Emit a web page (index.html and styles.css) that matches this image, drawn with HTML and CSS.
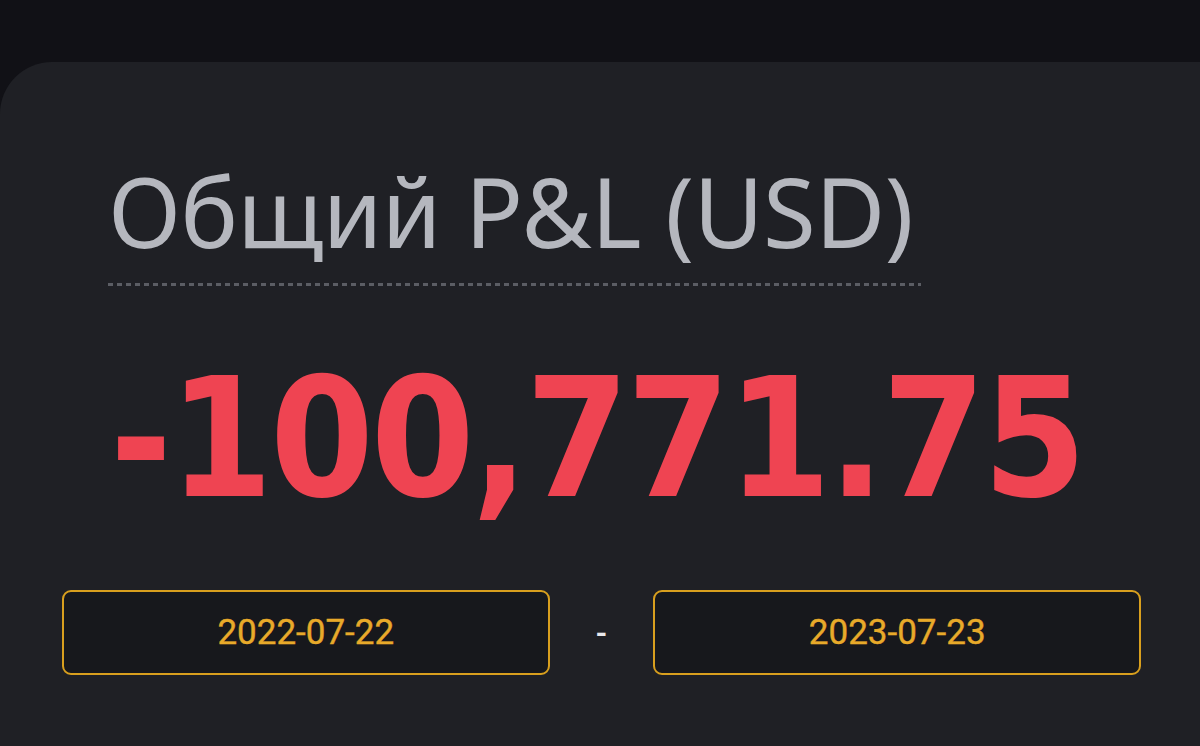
FILE: index.html
```html
<!DOCTYPE html>
<html lang="ru">
<head>
  <meta charset="UTF-8" />
  <meta name="viewport" content="width=device-width, initial-scale=1.0"/>
  <title>Общий P&amp;L</title>
  <link rel="stylesheet" href="styles.css">
</head>
<body>
  <div class="card">
    <div class="pnl-head">
      <h2 class="pnl-title">Общий P&amp;L (USD)</h2>
    </div>
    <div class="pnl-value">-100,771.75</div>
    <div class="range">
      <div class="date-box">2022-07-22</div>
      <span class="range-sep">-</span>
      <div class="date-box">2023-07-23</div>
    </div>
  </div>
</body>
</html>
```

FILE: styles.css
```css
body { margin: 0; padding: 62px 0 0; background: #111116; font-family: "Noto Sans", sans-serif; overflow: hidden; }
.card {
  box-sizing: border-box; background: #1f2025; border-radius: 52px 0 0 0;
  padding: 96px 59px 0 62px; height: calc(100vh - 62px);
}
.pnl-head { margin-left: 46px; display: inline-block; padding-bottom: 22px; padding-right: 8px;
  background-image: linear-gradient(to right, #5b5d64 55%, transparent 55%);
  background-size: 9px 3px; background-repeat: repeat-x; background-position: left bottom;
}
.pnl-title { margin: 0; font-weight: 400; font-size: 96px; line-height: 1.1; color: #b5b7be; letter-spacing: -0.6px; }
.pnl-value {
  margin: 70px 0 0 48px; font-family: "DejaVu Sans Condensed", "DejaVu Sans", sans-serif;
  font-weight: 700; font-size: 166px; line-height: 1; color: #ef4452; letter-spacing: -3px;
}
.range { display: grid; grid-template-columns: 1fr auto 1fr; column-gap: 46px; align-items: center; margin-top: 68px; }
.date-box {
  box-sizing: border-box; height: 85px; border: 2.5px solid #d89f1e; border-radius: 9px; background: #17181c;
  display: flex; align-items: center; justify-content: center;
  font-family: Roboto, sans-serif; font-size: 35px; font-weight: 400; color: #e8aa2a;
  -webkit-text-stroke: 0.4px #e8aa2a;
}
.range-sep { color: #e9e9ec; font-family: Roboto, sans-serif; font-size: 30px; font-weight: 700; }
```
